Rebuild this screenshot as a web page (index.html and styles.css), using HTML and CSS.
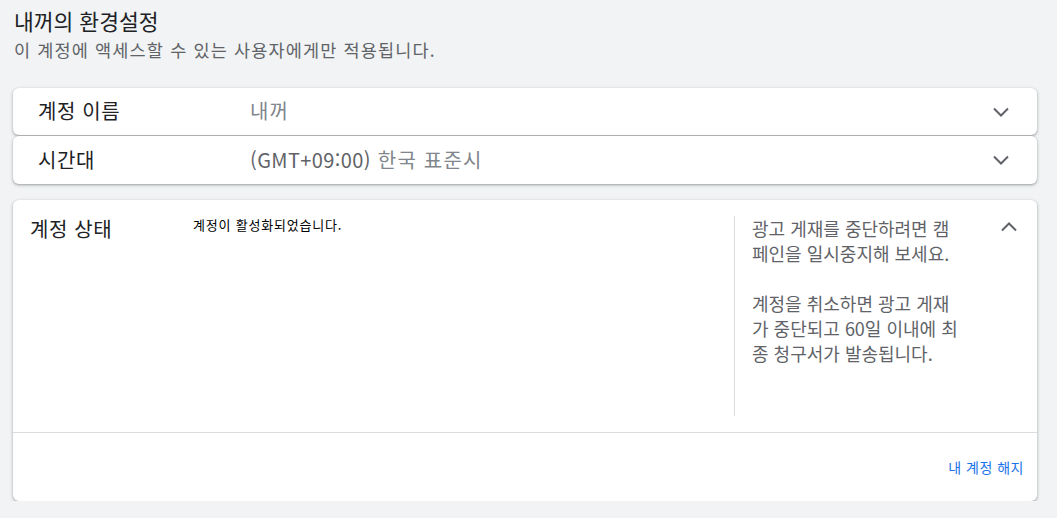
FILE: index.html
```html
<!DOCTYPE html>
<html lang="ko">
<head>
<meta charset="utf-8">
<link rel="stylesheet" href="styles.css">
</head>
<body>
<div class="page">
  <header class="head">
    <h1 class="title">내꺼의 환경설정</h1>
    <p class="subtitle">이 계정에 액세스할 수 있는 사용자에게만 적용됩니다.</p>
  </header>

  <section class="group">
    <div class="card row">
      <div class="row-label">계정 이름</div>
      <div class="row-value">내꺼</div>
      <svg class="chev" width="16" height="10" viewBox="0 0 16 10"><path d="M1 1.5 L8 8.5 L15 1.5" fill="none" stroke="#5f6368" stroke-width="2"/></svg>
    </div>
    <div class="card row">
      <div class="row-label">시간대</div>
      <div class="row-value"><span class="gmt">(GMT+09:00)</span> 한국 표준시</div>
      <svg class="chev" width="16" height="10" viewBox="0 0 16 10"><path d="M1 1.5 L8 8.5 L15 1.5" fill="none" stroke="#5f6368" stroke-width="2"/></svg>
    </div>
  </section>

  <section class="card status">
    <div class="status-main">
      <div class="status-label">계정 상태</div>
      <div class="status-content">계정이 활성화되었습니다.</div>
      <aside class="status-aside">
        <p>광고 게재를 중단하려면 캠<br>페인을 일시중지해 보세요.</p>
        <p>계정을 취소하면 광고 게재<br>가 중단되고 60일 이내에 최<br>종 청구서가 발송됩니다.</p>
      </aside>
      <svg class="chev-up" width="16" height="10" viewBox="0 0 16 10"><path d="M1 8.5 L8 1.5 L15 8.5" fill="none" stroke="#5f6368" stroke-width="2"/></svg>
    </div>
    <div class="status-foot">
      <a class="cancel" href="#">내 계정 해지</a>
    </div>
  </section>
</div>
</body>
</html>
```

FILE: styles.css
```css
* { box-sizing: border-box; }
html, body { margin: 0; padding: 0; }
body {
  background: #f1f3f4;
  font-family: "Noto Sans CJK KR", "Noto Sans", Roboto, sans-serif;
  color: #202124;
}
.page {
  padding: 6px 20px 0 13px;
}
.head { margin-left: 1px; }
.title {
  margin: 0;
  font-size: 21.5px;
  font-weight: 400;
  line-height: 30px;
  color: #202124;
}
.subtitle {
  margin: 2px 0 0;
  font-size: 17.5px;
  letter-spacing: 1.15px;
  line-height: 24px;
  color: #5f6368;
}
.group {
  margin-top: 26px;
  display: flex;
  flex-direction: column;
  gap: 1px;
}
.card {
  background: #fff;
  border-radius: 6px;
  box-shadow: 0 1px 2px rgba(60,64,67,.3), 0 1px 3px 1px rgba(60,64,67,.15);
}
.row {
  display: flex;
  align-items: center;
  height: 47px;
  padding: 0 28px 2px 25px;
}
.row + .row { height: 48px; }
.row-label {
  width: 212px;
  font-size: 20px;
  letter-spacing: 0.6px;
  color: #202124;
}
.row-value {
  flex: 1;
  font-size: 20px;
  letter-spacing: 1.2px;
  color: #80868b;
}
.gmt { color: #5f6368; letter-spacing: 0.4px; }
.chev { display: block; margin-top: 2px; }

.status { margin-top: 16px; }
.status-main {
  display: flex;
  align-items: flex-start;
  padding: 16px 20px 16px 17px;
  border-bottom: 1px solid #dadce0;
}
.status-label {
  width: 163px;
  font-size: 20px;
  letter-spacing: 0.6px;
  line-height: 26px;
  color: #202124;
}
.status-content {
  flex: 1;
  font-size: 13px;
  letter-spacing: 0.8px;
  line-height: 18px;
  color: #000;
}
.status-aside {
  width: 243px;
  min-height: 200px;
  border-left: 1px solid #dadce0;
  padding-left: 17px;
  font-size: 18px;
  line-height: 25px;
  color: #5f6368;
  white-space: nowrap;
}
.status-aside p { margin: 0 0 25px; }
.status-aside p:last-child { margin-bottom: 0; }
.chev-up { display: block; margin-top: 6px; margin-left: 24px; }
.status-foot {
  display: flex;
  justify-content: flex-end;
  align-items: center;
  height: 68px;
  padding-right: 13px;
}
.cancel {
  font-size: 14px;
  letter-spacing: 0.5px;
  color: #1a73e8;
  text-decoration: none;
}
```
